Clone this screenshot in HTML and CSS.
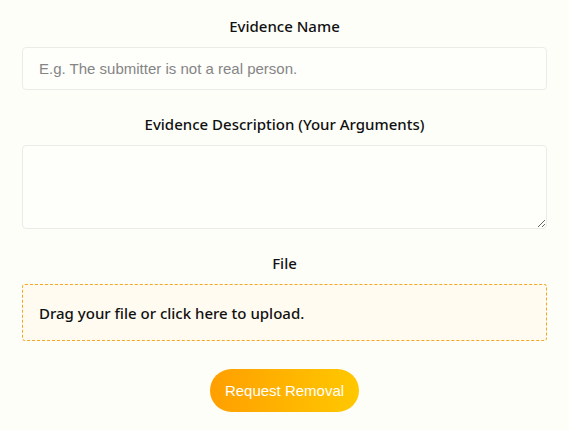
FILE: index.html
```html
<!DOCTYPE html>
<html>
<head>
<meta charset="utf-8">
<link rel="stylesheet" href="styles.css">
</head>
<body>
<form class="form">
  <div class="field">
    <label class="label" for="name">Evidence Name</label>
    <input class="input" id="name" type="text" placeholder="E.g. The submitter is not a real person.">
  </div>
  <div class="field">
    <label class="label" for="desc">Evidence Description (Your Arguments)</label>
    <textarea class="textarea" id="desc"></textarea>
  </div>
  <div class="field">
    <span class="label">File</span>
    <div class="dropzone">Drag your file or click here to upload.</div>
  </div>
  <div class="actions">
    <button class="button" type="button">Request Removal</button>
  </div>
</form>
</body>
</html>
```
FILE: styles.css
```css
html, body {
  margin: 0;
  background: #fefef9;
}
body {
  font-family: "Noto Sans", "Open Sans", sans-serif;
  color: #222;
}
.form {
  padding: 15px 22px 0;
  display: flex;
  flex-direction: column;
}
.field {
  display: flex;
  flex-direction: column;
  margin-bottom: 23px;
}
.label {
  text-align: center;
  font-size: 15px;
  font-weight: 500;
  line-height: 22px;
  margin-bottom: 10px;
  color: #111;
}
.input, .textarea {
  box-sizing: border-box;
  width: 100%;
  border: 1px solid #ebebe8;
  border-radius: 4px;
  background: #fefefb;
  font-family: "Liberation Sans", Arial, sans-serif;
  font-size: 15px;
  margin: 0;
}
.input {
  height: 43px;
  padding: 0 16px;
}
.input::placeholder {
  color: #858585;
}
.textarea {
  height: 84px;
  resize: vertical;
  display: block;
}
.dropzone {
  box-sizing: border-box;
  height: 57px;
  border: 1px dashed #f5a623;
  border-radius: 3px;
  background: #fffbf0;
  display: flex;
  align-items: center;
  padding: 0 16px;
  font-size: 15px;
  font-weight: 500;
  color: #111;
}
.actions {
  display: flex;
  justify-content: center;
  padding-top: 5px;
}
.button {
  width: 149px;
  height: 43px;
  border: 0;
  border-radius: 22px;
  background: linear-gradient(90deg, #ff9f00, #ffc800);
  color: #fff;
  font-family: "Liberation Sans", Arial, sans-serif;
  font-size: 15px;
  padding: 0;
}
```
